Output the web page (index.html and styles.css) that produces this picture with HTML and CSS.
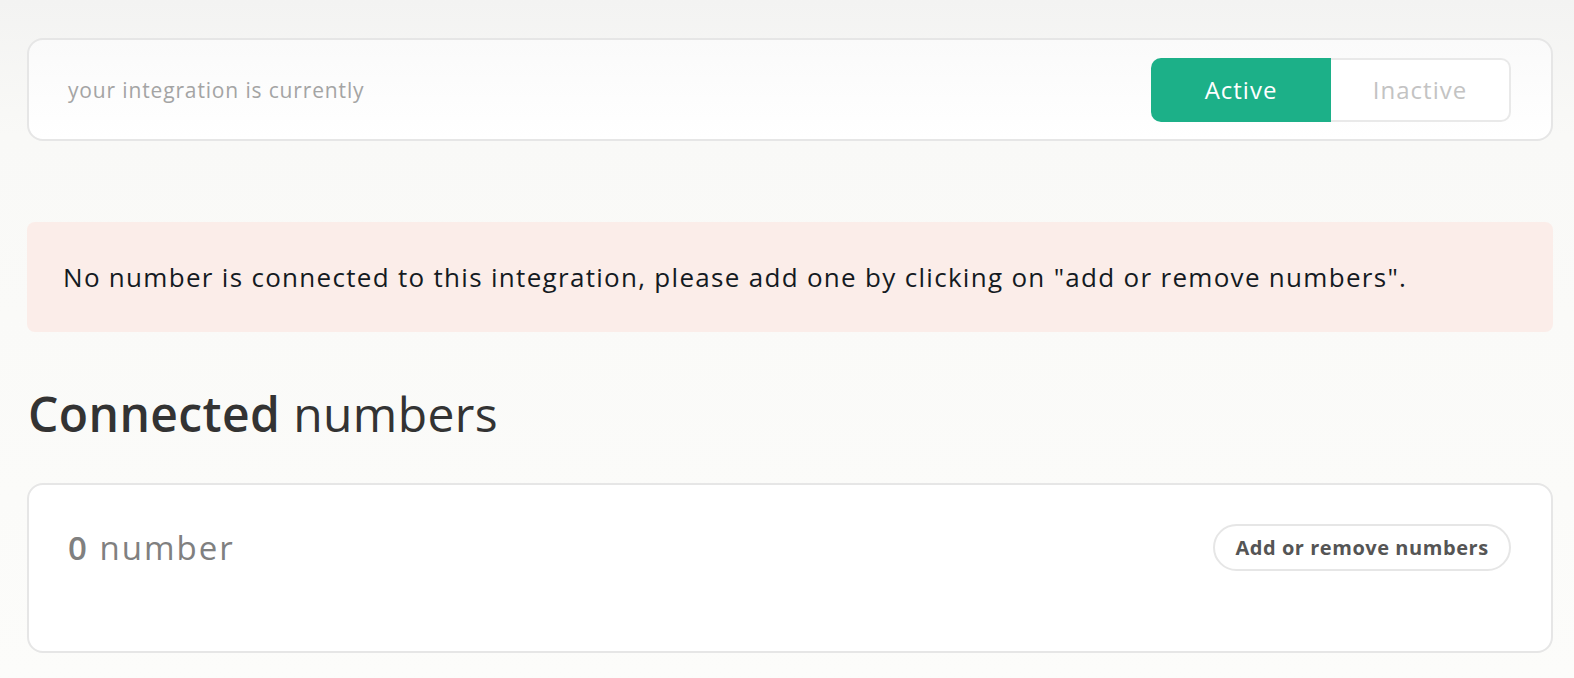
FILE: index.html
```html
<!DOCTYPE html>
<html lang="en">
<head>
<meta charset="utf-8">
<title>Integration</title>
<link rel="stylesheet" href="styles.css">
</head>
<body>
<main class="page">
  <section class="status-card">
    <span class="status-label">your integration is currently</span>
    <div class="toggle">
      <button class="toggle-btn is-active">Active</button>
      <button class="toggle-btn">Inactive</button>
    </div>
  </section>

  <div class="alert">No number is connected to this integration, please add one by clicking on "add or remove numbers".</div>

  <h2 class="section-title"><span class="strong">Connected</span> numbers</h2>

  <section class="numbers-card">
    <div class="numbers-row">
      <span class="count"><b>0</b> number</span>
      <button class="pill-btn">Add or remove numbers</button>
    </div>
  </section>
</main>
</body>
</html>
```
FILE: styles.css
```css
* { box-sizing: border-box; }
html, body { margin: 0; height: 100%; }
body {
  font-family: "Open Sans", "Liberation Sans", sans-serif;
  background: linear-gradient(180deg, #f3f3f2 0%, #f9f9f7 20%, #fcfcfa 100%);
}
.page {
  padding: 38px 21px 0 27px;
  display: flex;
  flex-direction: column;
}
.status-card {
  display: flex;
  align-items: center;
  justify-content: space-between;
  height: 103px;
  border: 2px solid #e6e6e6;
  border-radius: 16px;
  background: linear-gradient(180deg, #fafafa 0%, #ffffff 100%);
  padding: 0 40px 0 39px;
}
.status-label {
  font-size: 21px;
  color: #a4a4a4;
  letter-spacing: 0.85px;
}
.toggle {
  display: flex;
  height: 64px;
}
.toggle-btn {
  width: 180px;
  height: 64px;
  font-family: inherit;
  font-size: 24px;
  color: #c3c3c3;
  background: #fff;
  border: 2px solid #e9e9e9;
  border-left: none;
  border-radius: 0 10px 10px 0;
  letter-spacing: 1px;
}
.toggle-btn.is-active {
  background: #1cb088;
  color: #fff;
  border: none;
  border-radius: 10px 0 0 10px;
}
.alert {
  margin-top: 81px;
  height: 110px;
  display: flex;
  align-items: center;
  padding-left: 36px;
  background: #fbede9;
  border-radius: 8px;
  font-size: 26px;
  color: #141a22;
  letter-spacing: 1.3px;
}
.section-title {
  margin: 54px 0 0 1px;
  font-size: 48px;
  line-height: 56px;
  font-weight: 400;
  color: #333;
  letter-spacing: 0.4px;
}
.section-title .strong { font-weight: 600; }
.numbers-card {
  margin-top: 41px;
  height: 170px;
  border: 2px solid #e6e6e6;
  border-radius: 16px;
  background: #fff;
  padding: 39px 40px 0 39px;
}
.numbers-row {
  display: flex;
  align-items: center;
  justify-content: space-between;
}
.count {
  font-size: 33px;
  color: #808080;
  letter-spacing: 2px;
}
.count b { font-weight: 600; }
.pill-btn {
  height: 47px;
  width: 298px;
  border: 2px solid #e6e6e6;
  border-radius: 24px;
  background: #fff;
  font-family: inherit;
  font-weight: 700;
  font-size: 20px;
  letter-spacing: 0.55px;
  color: #555;
}
```
